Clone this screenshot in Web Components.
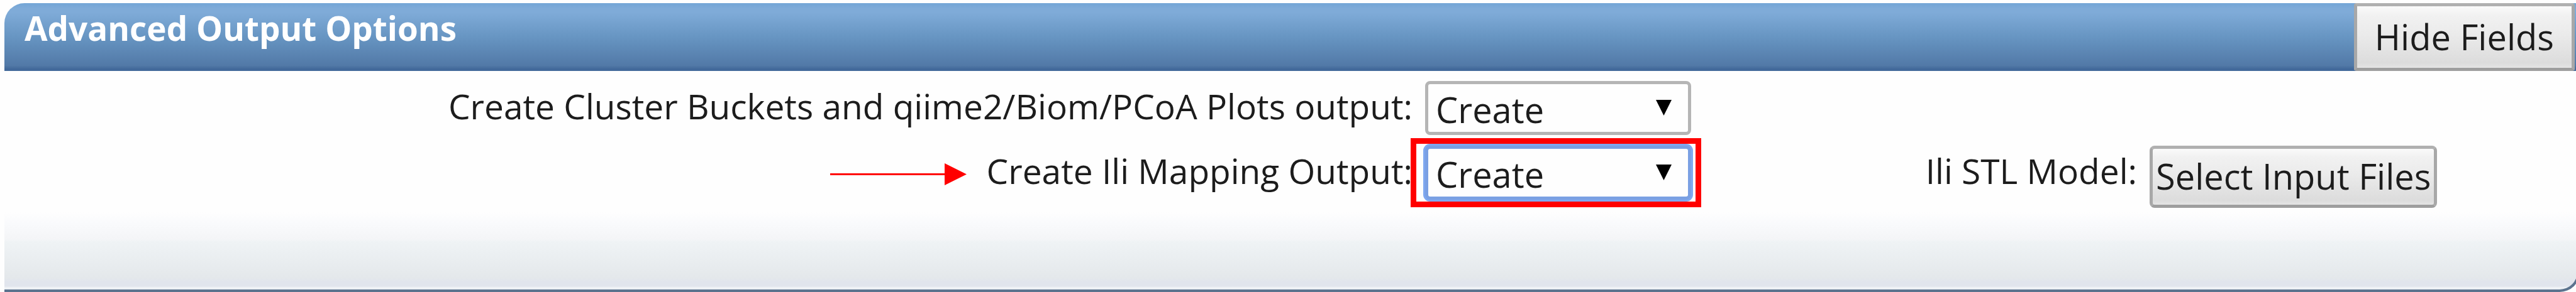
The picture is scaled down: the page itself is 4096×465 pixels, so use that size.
<!DOCTYPE html>
<html lang="en">
<head>
<meta charset="utf-8">
<title>Advanced Output Options</title>
<style>
  body {
    margin: 0;
    background: #fefefe;
    color: #1c1c1c;
    font: 55px/80px "Open Sans", "Noto Sans", sans-serif;
    overflow: hidden;
  }
</style>
</head>
<body>
<options-panel>
  <span slot="title">Advanced Output Options</span>
  <push-button slot="action">Hide Fields</push-button>
  <select-field>Create Cluster Buckets and qiime2/Biom/PCoA Plots output:</select-field>
  <select-field marked>Create Ili Mapping Output:</select-field>
  <file-field>Ili STL Model:</file-field>
</options-panel>

<script>
const buttonStyles = `
  button {
    display: block;
    box-sizing: border-box;
    height: 99px;
    margin: 0;
    padding: 0 5px 3px;
    border: 5px solid;
    border-color: #b0b0b0 #a8a8a8 #9e9e9e;
    border-radius: 8px;
    background: linear-gradient(#fafafa, #f1f1f1 15%, #ebebeb 45%, #dcdcdc 92%, #e4e4e4);
    color: inherit;
    font: inherit;
    font-size: 56px;
    white-space: nowrap;
  }`;

class BaseElement extends HTMLElement {
  constructor() {
    super();
    this.attachShadow({ mode: "open" }).innerHTML = this.constructor.markup;
  }
}

customElements.define("push-button", class extends BaseElement {
  static markup = `
    <style>
      :host { display: block; }
      ${buttonStyles}
      button { height: 108px; padding: 0 28px 3px; border-radius: 4px; }
    </style>
    <button type="button"><slot></slot></button>`;
});

customElements.define("pointer-arrow", class extends BaseElement {
  static markup = `
    <style>
      :host { display: block; flex: none; }
      svg { display: block; }
    </style>
    <svg width="217" height="35" viewBox="0 0 217 35" aria-hidden="true">
      <path d="M0 16h182V0l35 17.500-35 17.500V19H0z" fill="#f00"/>
    </svg>`;
});

customElements.define("select-field", class extends BaseElement {
  static markup = `
    <style>
      :host { display: contents; }
      .caption { grid-column: 1; display: flex; justify-content: flex-end; gap: 32px; }
      pointer-arrow { display: none; margin-top: 28px; }
      :host([marked]) pointer-arrow { display: block; }
      label { white-space: nowrap; }
      .control { grid-column: 2; position: relative; width: 423px; height: 86px; }
      select {
        appearance: none;
        display: block;
        box-sizing: border-box;
        width: 100%;
        height: 100%;
        margin: 0;
        padding: 0 12px 3px;
        border: 5px solid #b5b5b5;
        border-radius: 8px;
        outline: none;
        background: #fefefe;
        color: inherit;
        font: inherit;
        font-size: 56px;
      }
      .chevron { position: absolute; top: 30px; right: 31px; pointer-events: none; }
      .mark { display: none; position: absolute; inset: -12px -16px -12px -23px; border: 9px solid #f00; pointer-events: none; }
      :host([marked]) .mark { display: block; }
      :host([marked]) select { border-color: #7aa0e3; box-shadow: 0 0 0 3px #7fa8f0; }
    </style>
    <div class="caption"><pointer-arrow></pointer-arrow><label for="choice"><slot></slot></label></div>
    <div class="control">
      <select id="choice"><option>Create</option></select>
      <svg class="chevron" width="25" height="25" viewBox="0 0 25 25" aria-hidden="true"><path d="M0 0h25L12.500 25z"/></svg>
      <div class="mark"></div>
    </div>`;
});

customElements.define("file-field", class extends BaseElement {
  static markup = `
    <style>
      :host { display: contents; }
      ${buttonStyles}
      label { grid-column: 3; text-align: right; white-space: nowrap; }
      button { grid-column: 4; justify-self: start; }
    </style>
    <label for="files"><slot></slot></label>
    <button type="button" id="files">Select Input Files</button>`;
});

customElements.define("options-panel", class extends BaseElement {
  static markup = `
    <style>
      :host { display: block; padding: 5px 0 0 7px; overflow: hidden; }
      header {
        display: flex;
        justify-content: space-between;
        padding-right: 2px;
        border-radius: 32px 0 0 0;
        background: linear-gradient(#73a5d6, #7fabd8 8%, #7fabd8 14%, #6795c2 50%, #5279a7 92%, #42699a 97%, #42699a);
        color: #fff;
      }
      h2 { margin: 0 0 0 32px; font-size: 53px; font-weight: 700; }
      ::slotted([slot="action"]) { color: #1c1c1c; }
      .fields {
        display: grid;
        grid-template-columns: 2239fr 500fr 612fr 678fr;
        align-items: start;
        gap: 17px 20px;
        padding: 16px 0 7px;
      }
      footer {
        box-sizing: border-box;
        height: 127px;
        margin-right: -6px;
        border: solid #5b738e;
        border-width: 0 4px 4px 0;
        border-radius: 0 0 32px 0;
        background: linear-gradient(#fefefe, #f9fafc 15%, #f4f5f7 35%, #eff3f5 38%, #e4e8eb 85%, #e1e5ed 90%, #e1e5ed 96%, #eef1f5 97%);
      }
    </style>
    <header><h2><slot name="title"></slot></h2><slot name="action"></slot></header>
    <div class="fields"><slot></slot></div>
    <footer></footer>`;
});
</script>
</body>
</html>
